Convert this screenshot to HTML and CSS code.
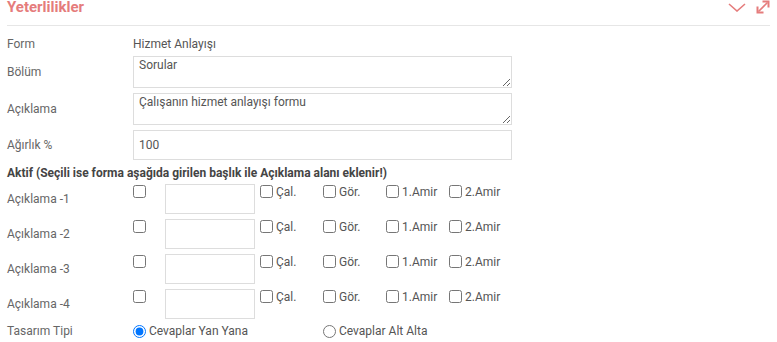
FILE: index.html
```html
<!DOCTYPE html>
<html lang="tr">
<head>
  <meta charset="UTF-8">
  <meta name="viewport" content="width=device-width, initial-scale=1.0">
  <title>Yeterlilikler</title>
  <link rel="stylesheet" href="styles.css">
</head>
<body>
  <div class="panel">
    <div class="panel-header">
      <span class="panel-title">Yeterlilikler</span>
      <div class="panel-tools">
        <svg class="tool" width="18" height="10" viewBox="0 0 18 10">
          <polyline points="1,2 9,9 17,2" fill="none" stroke="#e57c7c" stroke-width="1.6"/>
        </svg>
        <svg class="tool" width="14" height="14" viewBox="0 0 14 14">
          <line x1="2.5" y1="11.5" x2="11.5" y2="2.5" stroke="#e57c7c" stroke-width="1.6"/>
          <polyline points="6.5,1.5 12.5,1.5 12.5,7.5" fill="none" stroke="#e57c7c" stroke-width="2"/>
          <polyline points="1.5,6.5 1.5,12.5 7.5,12.5" fill="none" stroke="#e57c7c" stroke-width="2"/>
        </svg>
      </div>
    </div>

    <div class="form">
      <div class="row row-form">
        <label class="lbl">Form</label>
        <span class="value">Hizmet Anlayışı</span>
      </div>
      <div class="row row-area">
        <label class="lbl">Bölüm</label>
        <textarea class="field area">Sorular</textarea>
      </div>
      <div class="row row-area">
        <label class="lbl">Açıklama</label>
        <textarea class="field area">Çalışanın hizmet anlayışı formu</textarea>
      </div>
      <div class="row">
        <label class="lbl">Ağırlık %</label>
        <input class="field wide" type="text" value="100">
      </div>

      <div class="section-title">Aktif (Seçili ise forma aşağıda girilen başlık ile Açıklama alanı eklenir!)</div>

      <div class="row row-desc">
        <label class="lbl">Açıklama -1</label>
        <span class="cell-check"><input type="checkbox"></span>
        <input class="field small" type="text">
        <label class="opt"><input type="checkbox">Çal.</label>
        <label class="opt"><input type="checkbox">Gör.</label>
        <label class="opt"><input type="checkbox">1.Amir</label>
        <label class="opt"><input type="checkbox">2.Amir</label>
      </div>
      <div class="row row-desc">
        <label class="lbl">Açıklama -2</label>
        <span class="cell-check"><input type="checkbox"></span>
        <input class="field small" type="text">
        <label class="opt"><input type="checkbox">Çal.</label>
        <label class="opt"><input type="checkbox">Gör.</label>
        <label class="opt"><input type="checkbox">1.Amir</label>
        <label class="opt"><input type="checkbox">2.Amir</label>
      </div>
      <div class="row row-desc">
        <label class="lbl">Açıklama -3</label>
        <span class="cell-check"><input type="checkbox"></span>
        <input class="field small" type="text">
        <label class="opt"><input type="checkbox">Çal.</label>
        <label class="opt"><input type="checkbox">Gör.</label>
        <label class="opt"><input type="checkbox">1.Amir</label>
        <label class="opt"><input type="checkbox">2.Amir</label>
      </div>
      <div class="row row-desc">
        <label class="lbl">Açıklama -4</label>
        <span class="cell-check"><input type="checkbox"></span>
        <input class="field small" type="text">
        <label class="opt"><input type="checkbox">Çal.</label>
        <label class="opt"><input type="checkbox">Gör.</label>
        <label class="opt"><input type="checkbox">1.Amir</label>
        <label class="opt"><input type="checkbox">2.Amir</label>
      </div>

      <div class="row row-radio">
        <label class="lbl">Tasarım Tipi</label>
        <label class="radio-opt"><input type="radio" name="tip" checked>Cevaplar Yan Yana</label>
        <label class="radio-opt"><input type="radio" name="tip">Cevaplar Alt Alta</label>
      </div>
    </div>
  </div>
</body>
</html>
```

FILE: styles.css
```css
body {
  margin: 0;
  font-family: Roboto, "Liberation Sans", Arial, sans-serif;
  font-size: 12px;
  color: #555;
  background: #fff;
}
.panel {
  padding: 0 7px;
}
.panel-header {
  display: flex;
  justify-content: space-between;
  align-items: flex-start;
  height: 25px;
  border-bottom: 1px solid #e6e6e6;
}
.panel-title {
  font-size: 15px;
  line-height: 15px;
  font-weight: bold;
  color: #e57c7c;
}
.panel-tools {
  display: flex;
  align-items: flex-start;
  gap: 10px;
}
.tool {
  display: block;
}
.tool:first-child {
  margin-top: 2px;
}
.form {
  display: flex;
  flex-direction: column;
  padding-top: 9px;
}
.row {
  display: flex;
  align-items: center;
  line-height: 18px;
}
.lbl {
  width: 126px;
  flex: none;
  color: #666;
}
.value {
  color: #555;
}
.row-form {
  margin-bottom: 3px;
}
.row-area {
  margin-bottom: 5px;
}
.field {
  box-sizing: border-box;
  border: 1px solid #ddd;
  border-radius: 0;
  font-family: Roboto, "Liberation Sans", Arial, sans-serif;
  font-size: 12px;
  color: #555;
  padding: 2px 5px;
  margin: 0;
  outline: none;
  background: #fff;
}
.area {
  width: 379px;
  height: 32px;
  line-height: 14px;
  padding-top: 1px;
}
.wide {
  width: 379px;
  height: 30px;
}
.section-title {
  font-weight: bold;
  color: #444;
  line-height: 18px;
  margin-top: 4px;
  margin-bottom: 2px;
}
.row-desc {
  align-items: flex-start;
  margin-bottom: 5px;
}
.row-desc .lbl {
  align-self: center;
}
.cell-check {
  width: 32px;
  flex: none;
  display: flex;
  padding-top: 1px;
}
input[type="checkbox"],
input[type="radio"] {
  width: 13px;
  height: 13px;
  margin: 0;
}
.small {
  width: 90px;
  height: 30px;
  margin-right: 5px;
}
.opt {
  width: 63px;
  flex: none;
  display: flex;
  align-items: flex-start;
  gap: 3px;
  line-height: 14px;
  padding-top: 1px;
}
.row-radio {
  margin-top: -2px;
}
.radio-opt {
  width: 190px;
  flex: none;
  display: flex;
  align-items: center;
  gap: 3px;
}
```
